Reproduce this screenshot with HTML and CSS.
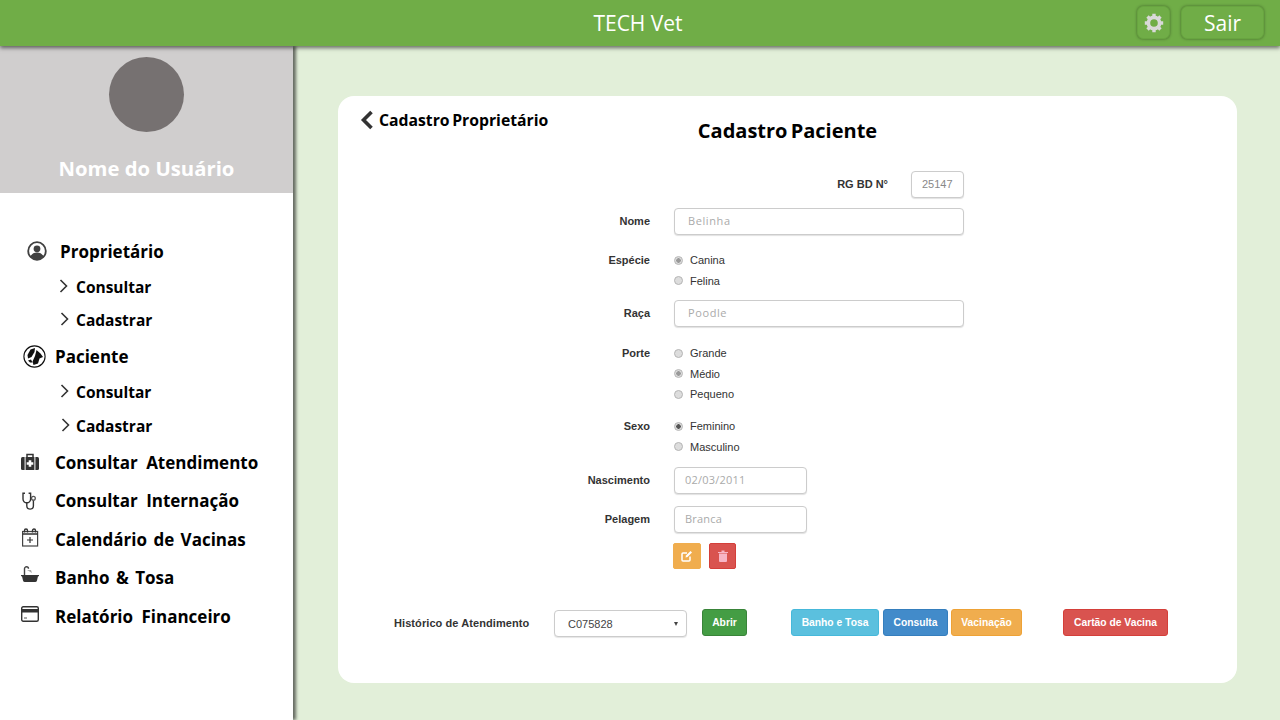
FILE: index.html
```html
<!DOCTYPE html>
<html lang="pt-BR">
   <head>
      <meta charset="UTF-8" />
      <title>TECH Vet</title>
      <link rel="stylesheet" href="styles.css">
   </head>
   <body>
      <header class="topbar">
         <h1 class="topbar-title">TECH Vet</h1>
         <div class="topbar-actions">
            <button class="top-btn top-btn-gear" type="button" aria-label="Configurações">
               <svg width="20" height="20" viewBox="0 0 20 20"><circle cx="10" cy="10" r="5.6" fill="none" stroke="#d9d9d9" stroke-width="3.6"/><path d="M10 .8v3.4M10 15.8v3.4M.8 10h3.4M15.8 10h3.4M3.5 3.5l2.4 2.4M14.1 14.1l2.4 2.4M3.5 16.5l2.4-2.4M14.1 5.9l2.4-2.4" stroke="#d9d9d9" stroke-width="3.4" fill="none"/></svg>
            </button>
            <button class="top-btn top-btn-exit" type="button">Sair</button>
         </div>
      </header>
      <div class="layout">
         <aside class="sidebar">
            <div class="profile">
               <div class="avatar"></div>
               <div class="user-name">Nome do Usuário</div>
            </div>
            <nav class="menu">
               <a class="menu-item owner">
                  <svg width="20" height="20" viewBox="0 0 20 20"><circle cx="10" cy="10" r="8.8" fill="#fff" stroke="#404040" stroke-width="1.8"/><circle cx="10" cy="7.8" r="3.4" fill="#404040"/><path d="M3.6 15.6c1-3.2 3.6-4.2 6.4-4.2s5.4 1 6.4 4.2A8.6 8.6 0 0 1 3.6 15.6z" fill="#404040"/></svg>
                  <span>Proprietário</span>
               </a>
               <a class="menu-item sub">
                  <svg class="chevron" width="9" height="14" viewBox="0 0 9 14"><path d="M1.5 1l6 6-6 6" fill="none" stroke="#333" stroke-width="1.6"/></svg>
                  <span>Consultar</span>
               </a>
               <a class="menu-item sub sub-tight">
                  <svg class="chevron" width="9" height="14" viewBox="0 0 9 14"><path d="M1.5 1l6 6-6 6" fill="none" stroke="#333" stroke-width="1.6"/></svg>
                  <span>Cadastrar</span>
               </a>
               <a class="menu-item patient">
                  <svg width="23" height="23" viewBox="0 0 23 23"><circle cx="11.5" cy="11.5" r="10.6" fill="#fff" stroke="#111" stroke-width="1.1"/><path d="M7.5 4.5L12 3l-.5 4-3 5-3.500 1.500-.5-3.500z" fill="#111"/><path d="M13.5 5l4 3.500L20 12l-3.500 1.500-1.500 5-4.500 1.500-1-3.500L12 11z" fill="#111"/><path d="M8 14.5l1.500 3-2.500 0-2-2z" fill="#111"/></svg>
                  <span>Paciente</span>
               </a>
               <a class="menu-item sub sub-shift">
                  <svg class="chevron" width="9" height="14" viewBox="0 0 9 14"><path d="M1.5 1l6 6-6 6" fill="none" stroke="#333" stroke-width="1.6"/></svg>
                  <span>Consultar</span>
               </a>
               <a class="menu-item sub sub-shift-more sub-snug">
                  <svg class="chevron" width="9" height="14" viewBox="0 0 9 14"><path d="M1.5 1l6 6-6 6" fill="none" stroke="#333" stroke-width="1.6"/></svg>
                  <span>Cadastrar</span>
               </a>
               <a class="menu-item main main-first">
                  <svg width="18" height="18" viewBox="0 0 18 18"><path d="M6 4V1.5h6V4" fill="none" stroke="#333" stroke-width="1.5"/><rect x="0" y="4" width="18" height="13" rx="1.5" fill="#333"/><rect x="3.6" y="4" width="1" height="13" fill="#fff"/><rect x="13.4" y="4" width="1" height="13" fill="#fff"/><path d="M7.7 7.2h2.6v2h2v2.6h-2v2H7.7v-2h-2V9.2h2z" fill="#fff"/></svg>
                  <span>Consultar Atendimento</span>
               </a>
               <a class="menu-item main">
                  <svg width="18" height="18" viewBox="0 0 18 18"><path d="M4 1.2H2V7a3.8 3.8 0 0 0 7.6 0V1.2h-2" fill="none" stroke="#333" stroke-width="1.4"/><path d="M5.8 10.800v3a3.300 3.300 0 0 0 6.600 0V8.200" fill="none" stroke="#333" stroke-width="1.4"/><circle cx="12.4" cy="6.3" r="1.9" fill="none" stroke="#555" stroke-width="1.3"/></svg>
                  <span>Consultar Internação</span>
               </a>
               <a class="menu-item main icon-up tight-words">
                  <svg width="18" height="19" viewBox="0 0 18 19"><rect x="1.6" y="3.5" width="15" height="14.5" fill="none" stroke="#444" stroke-width="1.2"/><path d="M3.5 4.500V2.500a1.500 1.500 0 0 1 3 0v2M11.500 4.500V2.500a1.500 1.500 0 0 1 3 0v2M1.600 6h15" fill="none" stroke="#333" stroke-width="1.4"/><path d="M9 9v6M6 12h6" stroke="#333" stroke-width="1.2"/></svg>
                  <span>Calendário de Vacinas</span>
               </a>
               <a class="menu-item main icon-up-more tight-words">
                  <svg width="18" height="18" viewBox="0 0 18 18"><path d="M3.5 9V2.800a2 2 0 0 1 4 0" fill="none" stroke="#444" stroke-width="1.4"/><path d="M6 4h4l1 3z" fill="#aaa"/><path d="M0 9h18v1.300h-1l-1 4.200a2 2 0 0 1-2 1.500H4a2 2 0 0 1-2-1.500L1 10.300H0z" fill="#333"/></svg>
                  <span>Banho &amp; Tosa</span>
               </a>
               <a class="menu-item main icon-up">
                  <svg width="18" height="16" viewBox="0 0 18 16"><rect x=".7" y=".7" width="16.6" height="14.6" rx="1.5" fill="#fff" stroke="#333" stroke-width="1.4"/><rect x="1" y="3" width="16" height="3.5" fill="#333"/><path d="M3 12h3" stroke="#555" stroke-width="1"/></svg>
                  <span>Relatório Financeiro</span>
               </a>
            </nav>
         </aside>
         <main class="content">
            <section class="card">
               <div class="card-head">
                  <a class="back-link">
                     <svg width="14" height="20" viewBox="0 0 14 20"><path d="M11.5 2l-8 8 8 8" fill="none" stroke="#333" stroke-width="3.6"/></svg>
                     <span>Cadastro Proprietário</span>
                  </a>
                  <h2 class="card-title">Cadastro Paciente</h2>
               </div>
               <form class="patient-form">
                  <div class="rg-row">
                     <label class="field-label">RG BD N°</label>
                     <input class="input input-rg" type="text" value="25147">
                  </div>
                  <div class="form-row row-nome">
                     <label class="field-label">Nome</label>
                     <input class="input" type="text" value="Belinha">
                  </div>
                  <div class="form-row row-especie">
                     <label class="field-label">Espécie</label>
                     <div class="radio-group">
                        <label class="radio"><input type="radio" name="especie" checked> Canina</label>
                        <label class="radio"><input type="radio" name="especie"> Felina</label>
                     </div>
                  </div>
                  <div class="form-row row-raca">
                     <label class="field-label">Raça</label>
                     <input class="input" type="text" value="Poodle">
                  </div>
                  <div class="form-row row-porte">
                     <label class="field-label">Porte</label>
                     <div class="radio-group">
                        <label class="radio"><input type="radio" name="porte"> Grande</label>
                        <label class="radio"><input type="radio" name="porte" checked> Médio</label>
                        <label class="radio"><input type="radio" name="porte"> Pequeno</label>
                     </div>
                  </div>
                  <div class="form-row row-sexo">
                     <label class="field-label">Sexo</label>
                     <div class="radio-group">
                        <label class="radio"><input class="radio-strong" type="radio" name="sexo" checked> Feminino</label>
                        <label class="radio"><input type="radio" name="sexo"> Masculino</label>
                     </div>
                  </div>
                  <div class="form-row row-nascimento">
                     <label class="field-label">Nascimento</label>
                     <input class="input input-short" type="text" value="02/03/2011">
                  </div>
                  <div class="form-row row-pelagem">
                     <label class="field-label">Pelagem</label>
                     <input class="input input-short" type="text" value="Branca">
                  </div>
                  <div class="form-row row-actions">
                     <span></span>
                     <div class="icon-actions">
                        <button class="icon-btn icon-btn-edit" type="button" aria-label="Editar">
                           <svg width="12" height="12" viewBox="0 0 12 12"><path d="M9 6.5V10a1 1 0 0 1-1 1H2a1 1 0 0 1-1-1V4a1 1 0 0 1 1-1h4" fill="none" stroke="#fff" stroke-width="1.5"/><path d="M4.5 7.5l.5-2L9.5 1 11 2.5 6.5 7z" fill="#fff"/></svg>
                        </button>
                        <button class="icon-btn icon-btn-del" type="button" aria-label="Excluir">
                           <svg width="10" height="12" viewBox="0 0 10 12"><path d="M0 2h10v1H0zM3.5.5h3V2h-3zM1 3.5h8V11a1 1 0 0 1-1 1H2a1 1 0 0 1-1-1z" fill="#f7b5c6"/></svg>
                        </button>
                     </div>
                  </div>
               </form>
               <div class="history-row">
                  <span class="history-label">Histórico de Atendimento</span>
                  <div class="select-wrap">
                     <select class="select"><option>C075828</option></select>
                  </div>
                  <button class="btn btn-green btn-open" type="button">Abrir</button>
                  <button class="btn btn-cyan btn-bath" type="button">Banho e Tosa</button>
                  <button class="btn btn-blue btn-consult" type="button">Consulta</button>
                  <button class="btn btn-orange btn-vaccine" type="button">Vacinação</button>
                  <button class="btn btn-red btn-card" type="button">Cartão de Vacina</button>
               </div>
            </section>
         </main>
      </div>
   </body>
</html>
```

FILE: styles.css
```css
* {
box-sizing: border-box;
}
body {
margin: 0;
height: 720px;
overflow: hidden;
font-family: 'Open Sans', sans-serif;
background: #e2efd9;
color: #000;
}
.topbar {
position: relative;
z-index: 2;
height: 46px;
background: #70ad47;
box-shadow: 0 2px 4px rgba(0,0,0,0.55);
display: flex;
align-items: center;
justify-content: center;
}
.topbar-title {
margin: 0 4px 0 0;
font-size: 21px;
font-weight: 400;
color: #fff;
}
.topbar-actions {
position: absolute;
top: 6px;
right: 16px;
display: flex;
gap: 11px;
}
.top-btn {
height: 33px;
padding: 0;
background: #70ad47;
border: 1px solid #68a540;
border-radius: 6px;
box-shadow: 0 0 3px rgba(0,0,0,0.4);
color: #fff;
font-family: 'Open Sans', sans-serif;
display: flex;
align-items: center;
justify-content: center;
}
.top-btn-gear {
width: 33px;
}
.top-btn-exit {
width: 83px;
font-size: 21px;
}
.layout {
display: flex;
height: 674px;
}
.sidebar {
position: relative;
z-index: 1;
width: 293px;
background: #fff;
box-shadow: 3px 0 3px rgba(0,0,0,0.55);
}
.profile {
height: 147px;
padding-top: 11px;
background: #d0cece;
display: flex;
flex-direction: column;
align-items: center;
}
.avatar {
width: 75px;
height: 75px;
border-radius: 50%;
background: #767171;
}
.user-name {
margin-top: 22px;
font-size: 20.3px;
font-weight: 700;
color: #fff;
}
.menu {
display: flex;
flex-direction: column;
padding-top: 46px;
}
.menu-item {
display: flex;
align-items: center;
height: 24px;
color: #000;
font-size: 17px;
font-weight: 700;
word-spacing: 4px;
}
.menu-item.tight-words {
word-spacing: 2px;
}
.menu-item.owner {
padding-left: 27px;
gap: 13px;
}
.menu-item.patient {
padding-left: 23px;
margin-top: 12px;
gap: 9px;
}
.menu-item.main {
padding-left: 21px;
margin-top: 14.5px;
gap: 16px;
}
.menu-item.main-first {
margin-top: 12px;
}
.menu-item.icon-up svg {
margin-bottom: 4px;
}
.menu-item.icon-up-more svg {
margin-bottom: 6px;
}
.menu-item.sub {
padding-left: 59px;
margin-top: 12px;
gap: 8px;
font-size: 15.5px;
}
.menu-item.sub-tight {
margin-top: 9px;
padding-left: 60px;
gap: 7px;
}
.menu-item.sub-shift {
padding-left: 60px;
gap: 7px;
}
.menu-item.sub-shift-more {
padding-left: 61px;
gap: 6px;
}
.menu-item.sub-snug {
margin-top: 10px;
}
.chevron {
margin-top: -2px;
}
.content {
flex: 1;
padding: 50px 43px 37px 45px;
}
.card {
height: 587px;
background: #fff;
border-radius: 16px;
}
.card-head {
position: relative;
height: 75px;
padding-top: 22px;
text-align: center;
}
.back-link {
position: absolute;
top: 13px;
left: 22px;
display: flex;
align-items: center;
gap: 5px;
font-size: 15.75px;
font-weight: 700;
word-spacing: -1.5px;
}
.card-title {
margin: 0;
font-size: 20px;
font-weight: 700;
line-height: 26px;
word-spacing: -2px;
}
.patient-form {
margin-left: 222px;
width: 404px;
font-family: 'Liberation Sans', sans-serif;
}
.form-row {
display: grid;
grid-template-columns: 90px 290px;
column-gap: 24px;
align-items: center;
}
.rg-row {
width: 404px;
display: flex;
justify-content: flex-end;
align-items: center;
gap: 23px;
}
.field-label {
padding-bottom: 2px;
font-size: 11px;
font-weight: 700;
color: #333;
text-align: right;
}
.row-especie .field-label,
.row-porte .field-label,
.row-sexo .field-label {
align-self: start;
line-height: 20px;
}
.row-nome {
margin-top: 10px;
}
.row-especie {
margin-top: 15px;
}
.row-raca {
margin-top: 9px;
}
.row-porte {
margin-top: 16px;
}
.row-sexo {
margin-top: 11.5px;
}
.row-nascimento {
margin-top: 10px;
}
.row-pelagem {
margin-top: 12px;
}
.row-actions {
margin-top: 10px;
}
.input {
width: 100%;
height: 27px;
padding: 0 13px 2px;
background: #fff;
border: 1px solid #ccc;
border-radius: 4px;
box-shadow: 0 1px 1px rgba(0,0,0,0.12);
font-family: 'Open Sans', sans-serif;
font-size: 11px;
letter-spacing: 0.6px;
color: #aaa;
}
.input-short {
width: 133px;
padding: 0 10px 2px;
letter-spacing: 0.2px;
}
.input-rg {
width: 53px;
padding: 0 10px 1px;
font-family: 'Liberation Sans', sans-serif;
letter-spacing: 0;
color: #888;
}
.radio-group {
display: flex;
flex-direction: column;
}
.radio {
display: flex;
align-items: center;
gap: 7px;
height: 20.5px;
font-size: 11px;
color: #333;
}
.radio input {
appearance: none;
width: 9px;
height: 9px;
margin: 0;
border: 1px solid #b5b5b5;
border-radius: 50%;
background: #ddd;
}
.radio input:checked {
background: radial-gradient(circle, #999 0 2px, #ddd 2.5px);
}
.radio input.radio-strong:checked {
background: radial-gradient(circle, #555 0 2px, #ddd 2.5px);
}
.icon-actions {
margin-left: -1px;
display: flex;
gap: 8px;
}
.icon-btn {
height: 26px;
padding: 0;
border-radius: 2px;
display: flex;
align-items: center;
justify-content: center;
}
.icon-btn-edit {
width: 28px;
background: #f0ad4e;
border: 1px solid #f0ad4e;
}
.icon-btn-del {
width: 27px;
background: #d9534f;
border: 1px solid #d43f3a;
}
.history-row {
margin-top: 40px;
padding-left: 56px;
display: flex;
align-items: flex-start;
font-family: 'Liberation Sans', sans-serif;
}
.history-label {
width: 160px;
margin-top: 1px;
font-size: 11px;
font-weight: 700;
line-height: 27px;
letter-spacing: 0.08px;
color: #333;
}
.select-wrap {
position: relative;
width: 133px;
height: 27px;
margin-top: 1px;
}
.select-wrap::after {
content: "";
position: absolute;
top: 12px;
right: 9px;
border-left: 2.5px solid transparent;
border-right: 2.5px solid transparent;
border-top: 4px solid #444;
}
.select {
appearance: none;
width: 100%;
height: 100%;
padding: 0 13px;
background: #fff;
border: 1px solid #ccc;
border-radius: 4px;
box-shadow: 0 1px 1px rgba(0,0,0,0.1);
font-family: 'Liberation Sans', sans-serif;
font-size: 11px;
color: #444;
}
.btn {
height: 27px;
padding: 0;
border-radius: 3px;
color: #fff;
font-family: 'Liberation Sans', sans-serif;
font-size: 10.3px;
font-weight: 700;
}
.btn-green {
background: #449d44;
border: 1px solid #398439;
}
.btn-cyan {
background: #5bc0de;
border: 1px solid #46b8da;
}
.btn-blue {
background: #428bca;
border: 1px solid #357ebd;
}
.btn-orange {
background: #f0ad4e;
border: 1px solid #eea236;
}
.btn-red {
background: #d9534f;
border: 1px solid #d43f3a;
}
.btn-open {
width: 45px;
margin-left: 15px;
}
.btn-bath {
width: 88px;
margin-left: 44px;
}
.btn-consult {
width: 65px;
margin-left: 4px;
}
.btn-vaccine {
width: 71px;
margin-left: 3px;
}
.btn-card {
width: 105px;
margin-left: 41px;
}
```
